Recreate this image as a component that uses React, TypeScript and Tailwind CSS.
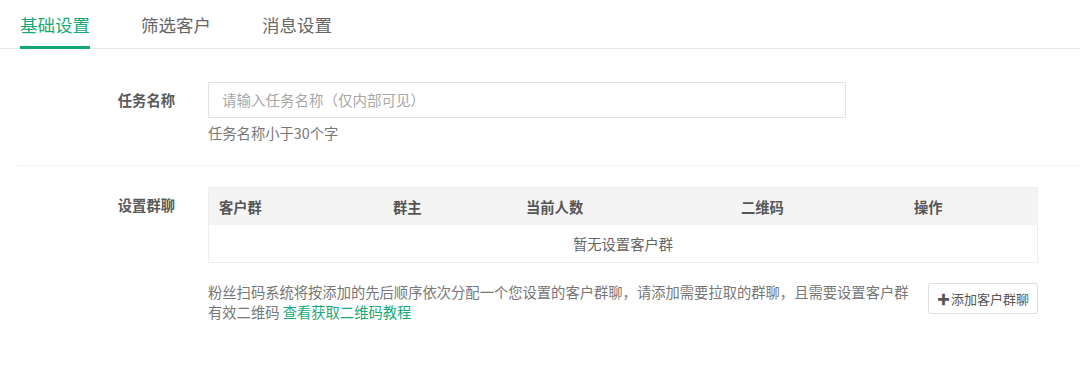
const tabs = ["基础设置", "筛选客户", "消息设置"];

const columns = [
  { title: "客户群", width: "w-[174px]" },
  { title: "群主", width: "w-[133px]" },
  { title: "当前人数", width: "w-[215px]" },
  { title: "二维码", width: "w-[173px]" },
  { title: "操作", width: "flex-1" },
];

export default function App() {
  return (
    <div className="w-[1080px] h-[366px] bg-white font-['Noto_Sans_CJK_SC','Noto_Sans',sans-serif] text-[14.3px] text-[#666]">
      {/* Tabs */}
      <div className="flex gap-[51px] px-5 border-b border-[#e6e8ec]">
        {tabs.map((tab, i) => (
          <div
            key={tab}
            className={
              i === 0
                ? "pt-[10px] pb-[6px] text-[17.5px] leading-[29px] text-[#17aa78] border-b-[3px] border-[#13a677] -mb-px"
                : "pt-[10px] pb-[9px] text-[17.5px] leading-[29px] text-[#666]"
            }
          >
            {tab}
          </div>
        ))}
      </div>

      {/* Task name */}
      <div className="flex gap-[33px] pt-[33px]">
        <div className="w-[175px] text-right font-bold text-[#5a5a5a] leading-[36px]">任务名称</div>
        <div>
          <div className="w-[638px] h-[36px] border border-[#e2e2e2] flex items-center px-[13px] text-[14.5px] text-[#a8a8a8]">
            请输入任务名称（仅内部可见）
          </div>
          <div className="mt-[5px] leading-[20px] text-[#777]">任务名称小于30个字</div>
        </div>
      </div>

      <div className="ml-4 mt-[22px] border-t border-dotted border-[#ececec]" />

      {/* Group chats */}
      <div className="flex gap-[33px] pt-[21px]">
        <div className="w-[175px] text-right font-bold text-[#5a5a5a] leading-[36px]">设置群聊</div>
        <div className="w-[830px]">
          <div className="border border-[#eeeeee]">
            <div className="flex h-[37px] bg-[#f4f4f4] items-center font-bold text-[#555]">
              {columns.map((c) => (
                <div key={c.title} className={`${c.width} pl-[10px]`}>
                  {c.title}
                </div>
              ))}
            </div>
            <div className="h-[37px] flex items-center justify-center text-[#666]">暂无设置客户群</div>
          </div>
          <div className="flex gap-[18px] mt-[19px]">
            <div className="w-[702px] text-[#777]">
              <p className="leading-[20px]">粉丝扫码系统将按添加的先后顺序依次分配一个您设置的客户群聊，请添加需要拉取的群聊，且需要设置客户群</p>
              <p className="leading-[20px]">
                有效二维码 <span className="text-[#17aa78]">查看获取二维码教程</span>
              </p>
            </div>
            <button className="w-[110px] h-[31px] mt-[1px] border border-[#dddddd] rounded-[3px] bg-white text-[#555] text-[13px] flex items-center justify-center">
              <span className="font-bold mr-[1px]">✚</span>添加客户群聊
            </button>
          </div>
        </div>
      </div>
    </div>
  );
}
